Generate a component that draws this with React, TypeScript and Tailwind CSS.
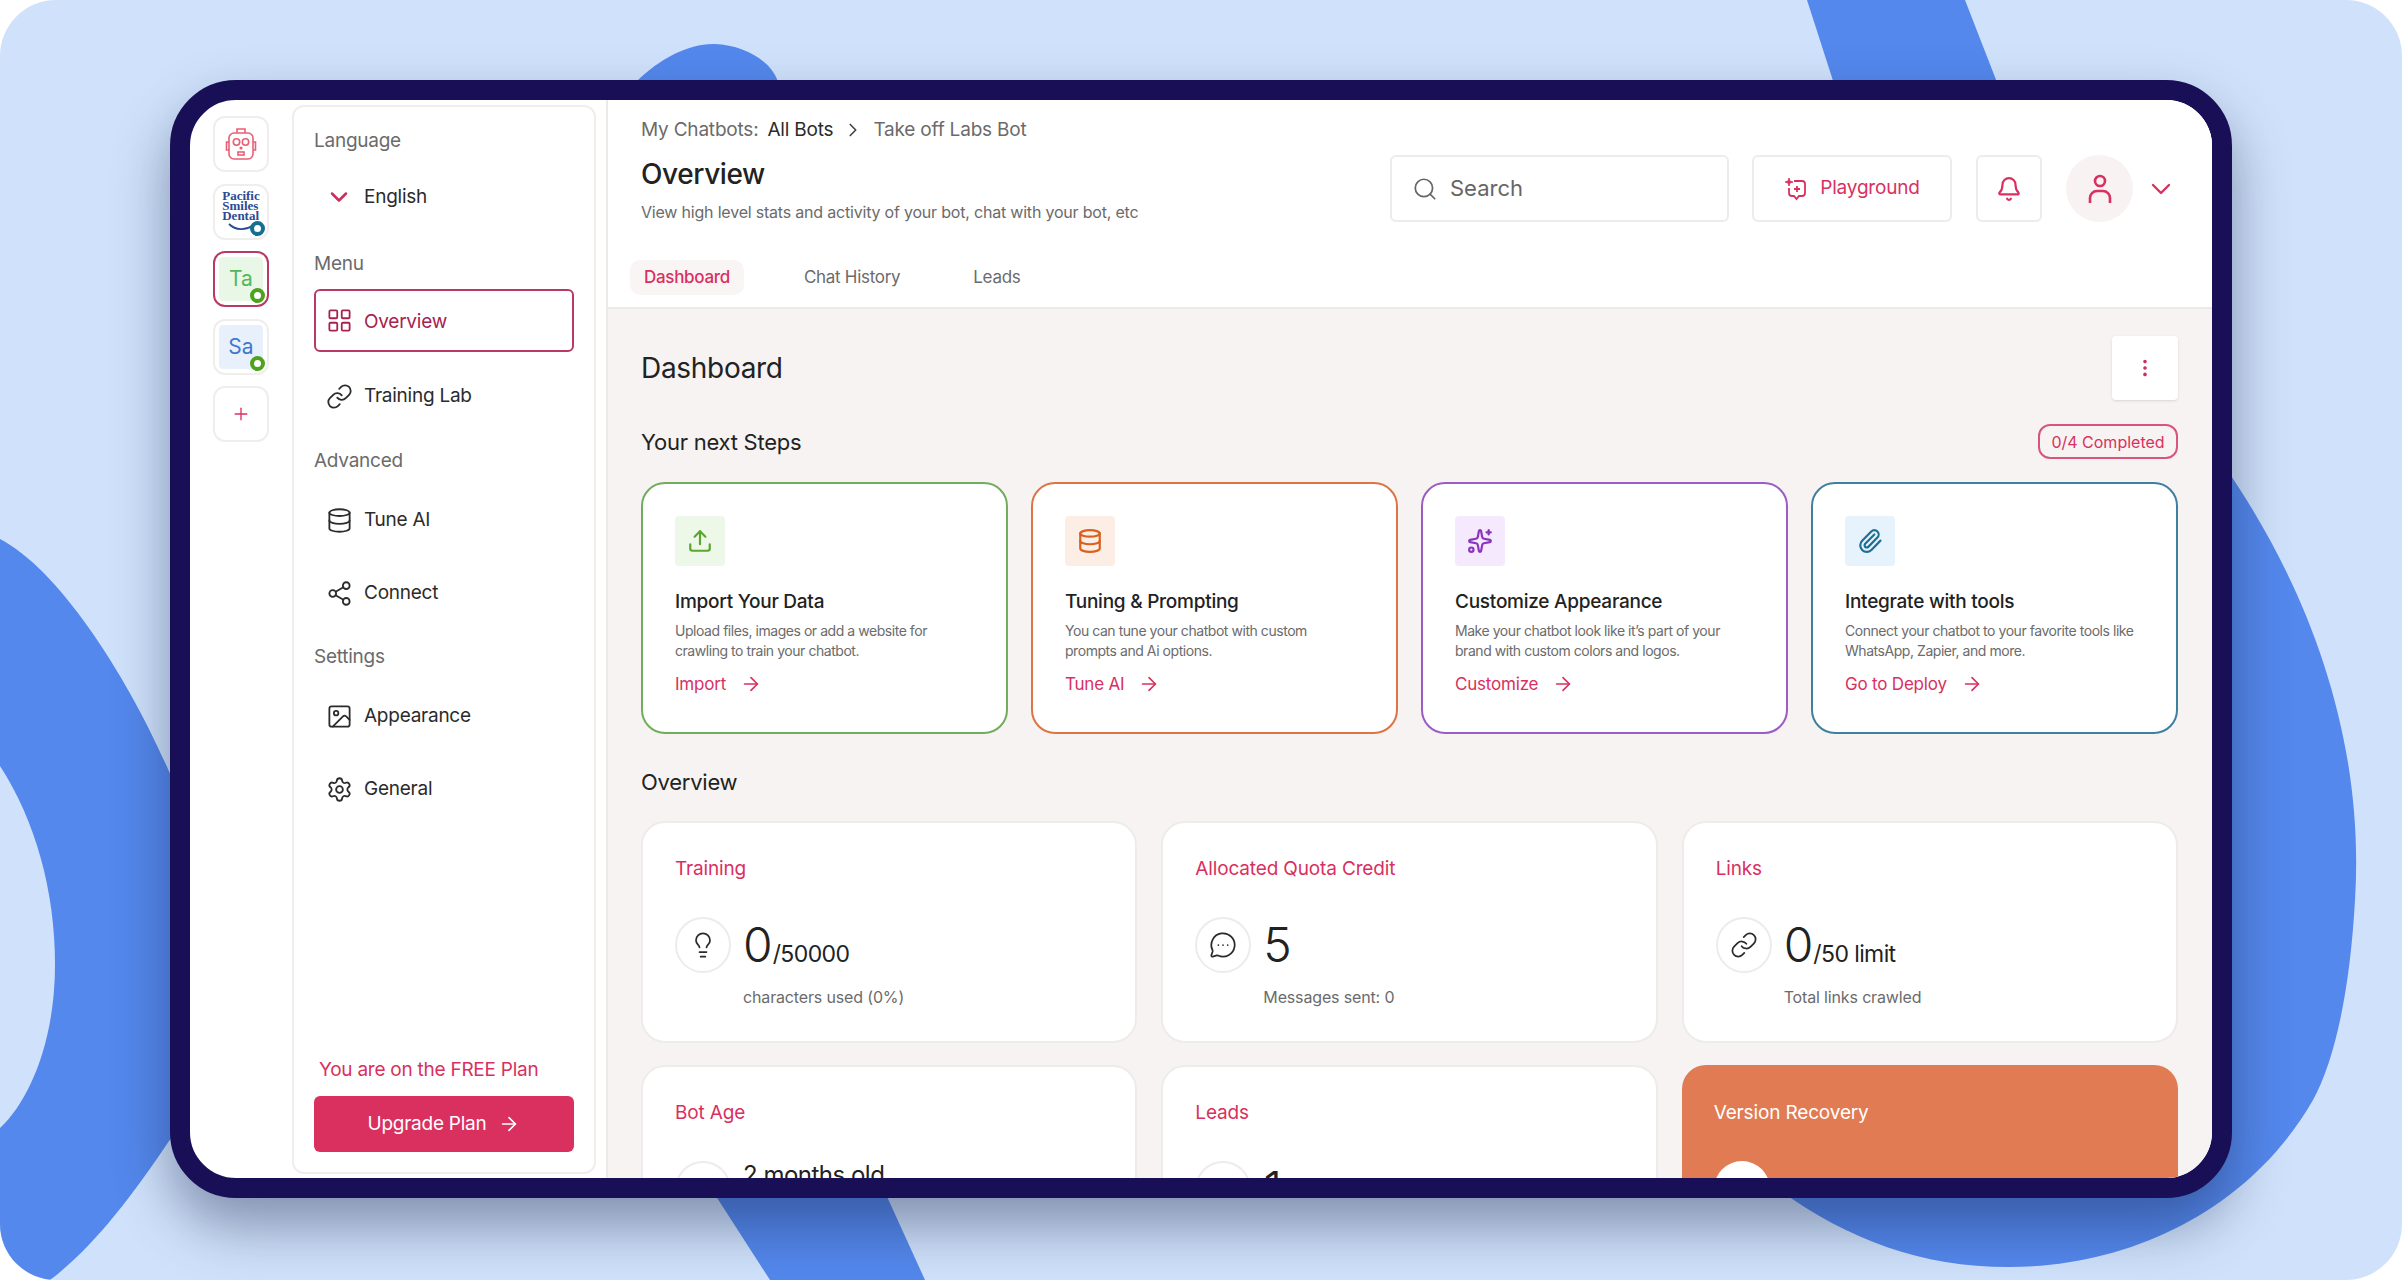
import { ArrowRight, Bell, ChevronDown, ChevronRight, Database, Image, LayoutGrid, Lightbulb, Link, MessageCircleMore, MoreVertical, Paperclip, Plus, Search, Settings, Share2, Sparkles, Upload } from 'lucide-react';

const steps = [
  { title: 'Import Your Data', lines: ['Upload files, images or add a website for', 'crawling to train your chatbot.'], link: 'Import', border: 'border-[#72ad5c]', tile: 'bg-[#edf8e8]', color: 'text-[#5aa630]', icon: Upload },
  { title: 'Tuning & Prompting', lines: ['You can tune your chatbot with custom', 'prompts and Ai options.'], link: 'Tune AI', border: 'border-[#dd7443]', tile: 'bg-[#fdeee5]', color: 'text-[#d9601f]', icon: Database },
  { title: 'Customize Appearance', lines: ['Make your chatbot look like it’s part of your', 'brand with custom colors and logos.'], link: 'Customize', border: 'border-[#9b5cc4]', tile: 'bg-[#f5e9fd]', color: 'text-[#8a35bd]', icon: Sparkles },
  { title: 'Integrate with tools', lines: ['Connect your chatbot to your favorite tools like', 'WhatsApp, Zapier, and more.'], link: 'Go to Deploy', border: 'border-[#3f7f9f]', tile: 'bg-[#e6f3fc]', color: 'text-[#1d6f96]', icon: Paperclip },
];

const stats = [
  { label: 'Training', icon: Lightbulb, big: '0', small: '/50000', sub: 'characters used (0%)' },
  { label: 'Allocated Quota Credit', icon: MessageCircleMore, big: '5', small: '', sub: 'Messages sent: 0' },
  { label: 'Links', icon: Link, big: '0', small: '/50 limit', sub: 'Total links crawled' },
];

function Background() {
  return (
    <svg className="absolute inset-0" width="2402" height="1280" viewBox="0 0 2402 1280">
      <path d="M0 539 C60 570 130 680 171 776 L230 900 L171 1138 C130 1200 90 1250 50 1280 L0 1280 Z" fill="#5488ec" />
      <path d="M0 766 C35 820 55 890 55 965 C55 1040 30 1100 0 1128 Z" fill="#d0e2fb" />
      <path d="M1807 0 L1965 0 L2000 90 L1836 90 Z" fill="#5488ec" />
      <path d="M636 82 C660 58 690 43 715 44 C745 45 772 62 778 82 Z" fill="#5488ec" />
      <path d="M712 1190 L884 1190 L925 1280 L770 1280 Z" fill="#5488ec" />
      <path d="M2225 467 C2310 590 2365 740 2355 900 C2350 990 2335 1060 2313 1100 C2250 1210 2130 1267 2009 1267 C1920 1267 1850 1240 1779 1190 L1779 467 Z" fill="#5488ec" />
    </svg>
  );
}

function RailTile({ children, active }: { children: React.ReactNode; active?: boolean }) {
  return (
    <div className={`relative flex h-[56px] w-[56px] items-center justify-center rounded-[12px] border-2 bg-white ${active ? 'border-[#b73a63]' : 'border-[#f0eeec]'}`}>
      {children}
    </div>
  );
}

function Dot({ ring }: { ring: string }) {
  return <span className={`absolute bottom-[2px] right-[2px] h-[15px] w-[15px] rounded-full border-[4px] bg-white ${ring}`} />;
}

function Rail() {
  return (
    <div className="flex w-[102px] shrink-0 flex-col gap-[11.5px] pl-[23px] pt-[16px]">
      <RailTile>
        <svg width="32" height="34" viewBox="0 0 32 34" fill="none" stroke="#ea5f74" strokeWidth="1.6">
          <rect x="4" y="6" width="24" height="26" rx="5" />
          <path d="M12 6V2h8v4M4 15H1.5v8H4M28 15h2.5v8H28" />
          <circle cx="11.5" cy="15" r="3.2" />
          <circle cx="20.5" cy="15" r="3.2" />
          <circle cx="16" cy="21" r="0.8" fill="#ea5f74" />
          <rect x="13" y="25" width="6" height="3" />
        </svg>
      </RailTile>
      <RailTile>
        <div className="flex flex-col items-start pb-[1px] font-['Liberation_Serif',serif] text-[13px] font-bold leading-[10px] text-[#2c4a93]">
          <span>Pacific</span>
          <span>Smiles</span>
          <span>Dental</span>
          <svg className="ml-[6px] mt-[2px]" width="28" height="8" viewBox="0 0 28 8" fill="none" stroke="#2c4a93" strokeWidth="1.8">
            <path d="M1 1 C8 8 18 7 24 3" />
          </svg>
        </div>
        <Dot ring="border-[#15708f]" />
      </RailTile>
      <RailTile active>
        <div className="flex h-[44px] w-[44px] items-center justify-center rounded-[4px] bg-[#e9f8e6] text-[21px] text-[#4fb85c]">Ta</div>
        <Dot ring="border-[#4ea21f]" />
      </RailTile>
      <RailTile>
        <div className="flex h-[44px] w-[44px] items-center justify-center rounded-[4px] bg-[#e8f1fb] text-[21px] text-[#3f78cf]">Sa</div>
        <Dot ring="border-[#4ea21f]" />
      </RailTile>
      <RailTile>
        <Plus className="h-[20px] w-[20px] text-[#d9305f]" strokeWidth={1.6} />
      </RailTile>
    </div>
  );
}

function NavItem({ icon: Icon, label }: { icon: typeof Search; label: string }) {
  return (
    <div className="flex h-[62px] items-center pl-[12px] text-[19px] tracking-[-0.25px] text-[#2b2b2b]">
      <Icon className="mr-[11px] h-[27px] w-[27px]" strokeWidth={1.6} />
      {label}
    </div>
  );
}

function Sidebar() {
  return (
    <div className="mb-[4px] mt-[5px] flex w-[304px] shrink-0 flex-col rounded-[12px] border-2 border-[#f0eeec] bg-white px-[20px] tracking-[-0.25px]">
      <p className="mt-[21px] text-[19px] leading-[26px] text-[#6b6b6b]">Language</p>
      <div className="mt-[18px] flex h-[50px] items-center pl-[11px] text-[19px] text-[#2b2b2b]">
        <ChevronDown className="mr-[11px] h-[28px] w-[28px] text-[#c9305f]" strokeWidth={2.2} />
        English
      </div>
      <p className="mt-[29px] text-[19px] leading-[26px] text-[#6b6b6b]">Menu</p>
      <div className="mt-[12px] flex h-[63px] items-center rounded-[6px] border-2 border-[#b73a63] pl-[10px] text-[19px] text-[#a8224f]">
        <LayoutGrid className="mr-[11px] h-[27px] w-[27px]" strokeWidth={1.6} />
        <span className="pt-[3px]">Overview</span>
      </div>
      <div className="mt-[13px]"><NavItem icon={Link} label="Training Lab" /></div>
      <p className="mt-[21px] text-[19px] leading-[26px] text-[#6b6b6b]">Advanced</p>
      <div className="mt-[15px]"><NavItem icon={Database} label="Tune AI" /></div>
      <div className="mt-[11px]"><NavItem icon={Share2} label="Connect" /></div>
      <p className="mt-[20px] text-[19px] leading-[26px] text-[#6b6b6b]">Settings</p>
      <div className="mt-[15px]"><NavItem icon={Image} label="Appearance" /></div>
      <div className="mt-[11px]"><NavItem icon={Settings} label="General" /></div>
      <p className="mt-auto pl-[5px] text-[19px] leading-[26px] text-[#d9305f]">You are on the FREE Plan</p>
      <div className="mb-[20px] mt-[13px] flex h-[56px] items-center justify-center gap-[12px] rounded-[6px] bg-[#d9305f] text-[19px] text-white">
        Upgrade Plan
        <ArrowRight className="h-[22px] w-[22px]" strokeWidth={1.8} />
      </div>
    </div>
  );
}

function Header() {
  return (
    <div className="flex h-[209px] shrink-0 flex-col border-b-2 border-[#ece9e7] bg-white">
      <div className="flex items-start justify-between pl-[33px] pr-[35px]">
        <div>
          <div className="mt-[17px] flex h-[26px] items-center text-[19px] tracking-[-0.2px] text-[#6b6b6b]">
            My Chatbots:
            <span className="ml-[9px] text-[#2b2b2b]">All Bots</span>
            <ChevronRight className="mx-[9px] h-[22px] w-[22px] text-[#444]" strokeWidth={1.8} />
            Take off Labs Bot
          </div>
          <h1 className="mt-[13px] text-[28px] font-medium leading-[36px] tracking-[-0.4px] text-[#222]">Overview</h1>
          <p className="mt-[8px] text-[16px] leading-[24px] tracking-[-0.2px] text-[#6b6b6b]">View high level stats and activity of your bot, chat with your bot, etc</p>
        </div>
        <div className="mt-[55px] flex items-center">
          <div className="flex h-[67px] w-[339px] items-center gap-[12px] rounded-[6px] border-2 border-[#eeecea] pl-[20px] text-[22px] text-[#666]">
            <Search className="h-[26px] w-[26px]" strokeWidth={1.6} />
            Search
          </div>
          <div className="ml-[23px] flex h-[67px] w-[200px] items-center justify-center gap-[12px] rounded-[6px] border-2 border-[#eeecea] text-[19px] tracking-[-0.2px] text-[#d9305f]">
            <svg width="24" height="26" viewBox="0 0 24 26" fill="none" stroke="currentColor" strokeWidth="1.8">
              <path d="M10 5h8a3 3 0 0 1 3 3v9a3 3 0 0 1-3 3h-3l-2.5 3-2.5-3H8a3 3 0 0 1-3-3v-5" />
              <path d="M13 10v6M10 13h6" />
              <path d="M5 2l1 3 3 1-3 1-1 3-1-3-3-1 3-1z" fill="currentColor" strokeWidth="0.8" />
            </svg>
            Playground
          </div>
          <div className="ml-[24px] flex h-[67px] w-[66px] items-center justify-center rounded-[6px] border-2 border-[#eeecea] text-[#d9305f]">
            <Bell className="h-[26px] w-[26px]" strokeWidth={2} />
          </div>
          <div className="ml-[24px] flex h-[67px] w-[67px] items-center justify-center rounded-full bg-[#f8f3f2] text-[#d9305f]">
            <svg width="26" height="30" viewBox="0 0 26 30" fill="none" stroke="currentColor" strokeWidth="2.6">
              <circle cx="13" cy="7" r="5" />
              <path d="M3 29v-5a7 7 0 0 1 7-7h6a7 7 0 0 1 7 7v5" />
            </svg>
          </div>
          <ChevronDown className="ml-[12px] h-[32px] w-[32px] text-[#d9305f]" strokeWidth={1.8} />
        </div>
      </div>
      <div className="mb-[12px] mt-auto flex items-center pl-[22px] text-[17px] tracking-[-0.3px] text-[#6b6b6b]">
        <span className="flex h-[35px] w-[114px] items-center justify-center rounded-[10px] bg-[#faf5f5] font-medium text-[#d9305f]">Dashboard</span>
        <span className="ml-[60px]">Chat History</span>
        <span className="ml-[73px]">Leads</span>
      </div>
    </div>
  );
}

function StepCard({ step }: { step: (typeof steps)[number] }) {
  const Icon = step.icon;
  return (
    <div className={`h-[252px] rounded-[24px] border-2 bg-white pl-[32px] pt-[32px] ${step.border}`}>
      <div className={`flex h-[50px] w-[50px] items-center justify-center rounded-[4px] ${step.tile} ${step.color}`}>
        <Icon className="h-[26px] w-[26px]" strokeWidth={2} />
      </div>
      <p className="mt-[22px] text-[19px] font-medium leading-[28px] tracking-[-0.25px] text-[#222]">{step.title}</p>
      <p className="mt-[5px] whitespace-nowrap text-[14px] leading-[20px] tracking-[-0.45px] text-[#6b6b6b]">{step.lines[0]}<br />{step.lines[1]}</p>
      <div className="mt-[11px] flex items-center gap-[14px] text-[17px] leading-[24px] tracking-[-0.2px] text-[#d9305f]">
        {step.link}
        <ArrowRight className="h-[22px] w-[22px]" strokeWidth={1.8} />
      </div>
    </div>
  );
}

function StatCard({ stat }: { stat: (typeof stats)[number] }) {
  const Icon = stat.icon;
  return (
    <div className="h-[222px] rounded-[24px] border-2 border-[#eeecea] bg-white pl-[32px] pt-[33px]">
      <p className="text-[19px] leading-[26px] tracking-[-0.15px] text-[#d9305f]">{stat.label}</p>
      <div className="mt-[35px] flex items-center">
        <div className="flex h-[56px] w-[56px] items-center justify-center rounded-full border-2 border-[#eeecea] text-[#2b2b2b]">
          <Icon className="h-[28px] w-[28px]" strokeWidth={1.5} />
        </div>
        <span className="ml-[12px] text-[48px] font-light leading-[56px] text-[#222]">{stat.big}</span>
        {stat.small && <span className="mt-[18px] text-[23px] leading-[32px] tracking-[-0.6px] text-[#222]">{stat.small}</span>}
      </div>
      <p className="ml-[68px] mt-[12px] text-[16px] leading-[24px] tracking-[-0.15px] text-[#6b6b6b]">{stat.sub}</p>
    </div>
  );
}

export default function App() {
  return (
    <div className="relative h-[1280px] w-[2402px] overflow-hidden bg-white font-['Inter',sans-serif]">
      <div className="absolute inset-0 overflow-hidden rounded-[56px] bg-[#d0e2fb]">
        <Background />
      </div>
      <div className="absolute left-[170px] top-[80px] flex h-[1118px] w-[2062px] overflow-hidden rounded-[66px] border-[20px] border-[#180f57] bg-white shadow-[0_28px_56px_rgba(20,30,70,0.42)]">
        <Rail />
        <Sidebar />
        <div className="ml-[10px] flex min-w-0 flex-1 flex-col border-l-2 border-[#ece9e7] bg-[#f6f3f2]">
          <Header />
          <div className="pl-[33px] pr-[34px]">
            <div className="mt-[27px] flex h-[64px] items-center justify-between">
              <h2 className="text-[28px] leading-[36px] tracking-[-0.3px] text-[#222]">Dashboard</h2>
              <div className="flex h-[64px] w-[66px] items-center justify-center rounded-[4px] bg-white text-[#c9305f] shadow-sm">
                <MoreVertical className="h-[22px] w-[22px]" strokeWidth={2} />
              </div>
            </div>
            <div className="mt-[24px] flex h-[35px] items-center justify-between">
              <h3 className="text-[22px] leading-[30px] tracking-[-0.25px] text-[#222]">Your next Steps</h3>
              <span className="flex h-[35px] w-[140px] items-center justify-center rounded-[12px] border-2 border-[#d9557c] text-[16px] text-[#d9305f]">0/4 Completed</span>
            </div>
            <div className="mt-[23px] grid grid-cols-4 gap-[23px]">
              {steps.map((s) => <StepCard key={s.title} step={s} />)}
            </div>
            <h3 className="mt-[33px] text-[22px] leading-[30px] tracking-[-0.25px] text-[#222]">Overview</h3>
            <div className="mt-[24px] grid grid-cols-3 gap-x-[24px] gap-y-[22px]">
              {stats.map((s) => <StatCard key={s.label} stat={s} />)}
              <div className="h-[222px] rounded-[24px] border-2 border-[#eeecea] bg-white pl-[32px] pt-[33px]">
                <p className="text-[19px] leading-[26px] tracking-[-0.15px] text-[#d9305f]">Bot Age</p>
                <div className="mt-[35px] flex items-start">
                  <div className="h-[56px] w-[56px] rounded-full border-2 border-[#eeecea]" />
                  <span className="ml-[12px] text-[24px] leading-[28px] tracking-[-0.5px] text-[#222]">2 months old</span>
                </div>
              </div>
              <div className="h-[222px] rounded-[24px] border-2 border-[#eeecea] bg-white pl-[32px] pt-[33px]">
                <p className="text-[19px] leading-[26px] tracking-[-0.15px] text-[#d9305f]">Leads</p>
                <div className="mt-[35px] flex items-start">
                  <div className="h-[56px] w-[56px] rounded-full border-2 border-[#eeecea]" />
                  <span className="ml-[12px] text-[48px] font-light leading-[56px] text-[#222]">1</span>
                </div>
              </div>
              <div className="h-[222px] rounded-[24px] bg-[#e17b53] pl-[32px] pt-[35px]">
                <p className="text-[19px] leading-[26px] tracking-[-0.15px] text-white">Version Recovery</p>
                <div className="mt-[35px] h-[56px] w-[56px] rounded-full bg-white" />
              </div>
            </div>
          </div>
        </div>
      </div>
    </div>
  );
}
